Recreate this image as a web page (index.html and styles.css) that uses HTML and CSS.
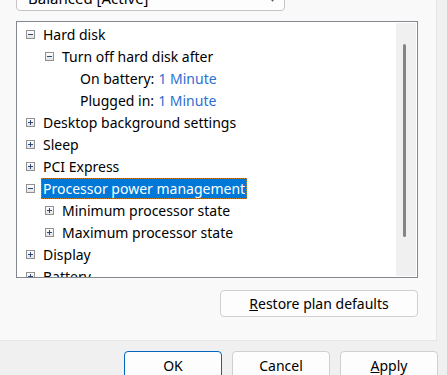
FILE: index.html
```html
<!DOCTYPE html>
<html lang="en">
<head>
  <meta charset="utf-8" />
  <title>Power Options - Advanced settings</title>
  <link rel="stylesheet" href="styles.css">
</head>
<body>
  <div class="panel">
    <div class="combo">
      <span class="combo-text">Balanced [Active]</span>
      <span class="combo-arrow"></span>
    </div>

    <div class="tree">
      <div class="tree-list">
        <div class="row lvl0"><span class="exp minus"></span><span class="label">Hard disk</span></div>
        <div class="row lvl1"><span class="exp minus"></span><span class="label">Turn off hard disk after</span></div>
        <div class="row lvl2"><span class="label">On battery:</span><span class="value">1 Minute</span></div>
        <div class="row lvl2"><span class="label">Plugged in:</span><span class="value">1 Minute</span></div>
        <div class="row lvl0"><span class="exp plus"></span><span class="label">Desktop background settings</span></div>
        <div class="row lvl0"><span class="exp plus"></span><span class="label">Sleep</span></div>
        <div class="row lvl0"><span class="exp plus"></span><span class="label">PCI Express</span></div>
        <div class="row lvl0"><span class="exp minus"></span><span class="label selected">Processor power management</span></div>
        <div class="row lvl1"><span class="exp plus"></span><span class="label">Minimum processor state</span></div>
        <div class="row lvl1"><span class="exp plus"></span><span class="label">Maximum processor state</span></div>
        <div class="row lvl0"><span class="exp plus"></span><span class="label">Display</span></div>
        <div class="row lvl0"><span class="exp plus"></span><span class="label">Battery</span></div>
      </div>
      <div class="scrollbar">
        <div class="thumb"></div>
      </div>
    </div>

    <div class="restore-row">
      <button class="btn restore"><u>R</u>estore plan defaults</button>
    </div>
  </div>

  <div class="footer">
    <button class="btn default">OK</button>
    <button class="btn">Cancel</button>
    <button class="btn"><u>A</u>pply</button>
  </div>
</body>
</html>
```

FILE: styles.css
```css
body {
  margin: 0;
  background: #f0f0f0;
  font-family: 'Noto Sans', 'Open Sans', sans-serif;
  font-size: 14px;
  color: #000;
  width: 447px;
  height: 375px;
  overflow: hidden;
}
.panel {
  width: 437px;
  height: 341px;
  box-sizing: border-box;
  background: #f9f9f9;
  border-right: 1px solid #e5e5e5;
  border-bottom: 1px solid #e5e5e5;
  padding-left: 16px;
  display: flex;
  flex-direction: column;
}
.combo {
  width: 269px;
  height: 26px;
  margin-top: -15px;
  box-sizing: border-box;
  border: 1px solid #c4c4c4;
  border-radius: 4px;
  background: #fdfdfd;
  display: flex;
  align-items: center;
  justify-content: space-between;
  padding: 0 8px 0 11px;
}
.combo-text {
  font-size: 15px;
}
.combo-arrow {
  width: 6px;
  height: 6px;
  border-right: 1px solid #555;
  border-bottom: 1px solid #555;
  transform: rotate(45deg);
  margin-top: -4px;
}
.tree {
  margin-top: 10px;
  width: 402px;
  height: 257px;
  box-sizing: border-box;
  border: 1px solid #828790;
  background: #fff;
  display: flex;
  overflow: hidden;
}
.tree-list {
  flex: 1;
  padding-top: 1px;
  overflow: hidden;
}
.row {
  height: 22px;
  display: flex;
  align-items: center;
  white-space: nowrap;
  font-size: 14px;
}
.lvl0 { padding-left: 9px; }
.lvl1 { padding-left: 28px; }
.lvl2 { padding-left: 61px; }
.exp {
  width: 9px;
  height: 9px;
  box-sizing: border-box;
  border: 1px solid #919191;
  background: linear-gradient(#fff, #e3e3e3);
  position: relative;
  margin-right: 6px;
  flex: none;
}
.exp::before {
  content: "";
  position: absolute;
  left: 1px;
  top: 3px;
  width: 5px;
  height: 1px;
  background: #2f4a7a;
}
.exp.plus::after {
  content: "";
  position: absolute;
  left: 3px;
  top: 1px;
  width: 1px;
  height: 5px;
  background: #2f4a7a;
}
.label {
  padding: 0 2px;
  line-height: 21px;
}
.label.selected {
  background: #0078d7;
  color: #fff;
  outline: 1px dotted #c47a1a;
  outline-offset: -1px;
}
.value {
  color: #2b6fd3;
  margin-left: 2px;
}
.scrollbar {
  width: 20px;
  margin: 1px 1px 1px 0;
  background: #f0f0f0;
  position: relative;
}
.thumb {
  position: absolute;
  left: 7px;
  top: 21px;
  width: 3px;
  height: 193px;
  border-radius: 2px;
  background: #858585;
}
.restore-row {
  width: 402px;
  display: flex;
  justify-content: flex-end;
  margin-top: 12px;
}
.btn {
  font-family: 'Noto Sans', 'Open Sans', sans-serif;
  font-size: 14px;
  color: #000;
  background: #fdfdfd;
  border: 1px solid #d0d0d0;
  border-radius: 4px;
  height: 27px;
  padding: 0;
}
.restore {
  width: 198px;
}
.footer {
  display: flex;
  justify-content: flex-end;
  gap: 10px;
  padding: 10px 9px 0 0;
}
.footer .btn {
  width: 98px;
  height: 28px;
}
.btn.default {
  border: 1px solid #0067c0;
}
```
